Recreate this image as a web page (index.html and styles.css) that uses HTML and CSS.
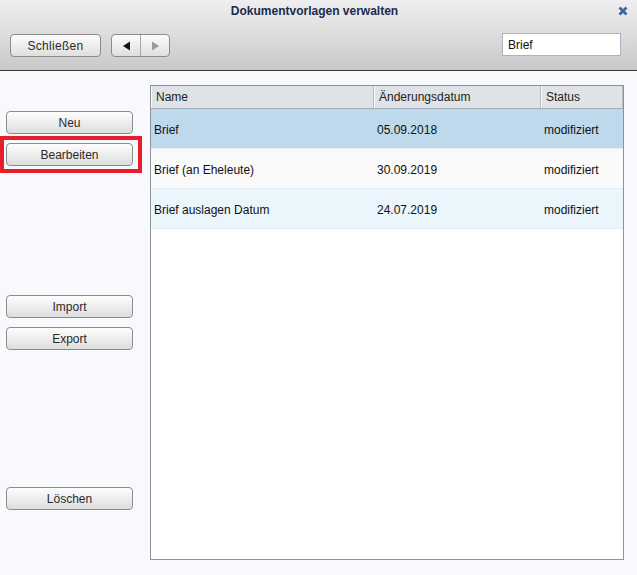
FILE: index.html
```html
<!DOCTYPE html>
<html lang="de">
<head>
<meta charset="utf-8">
<title>Dokumentvorlagen verwalten</title>
<link rel="stylesheet" href="styles.css">
</head>
<body>
<div class="dialog">
  <header class="header">
    <div class="titlebar">
      <span></span>
      <h1 class="title">Dokumentvorlagen verwalten</h1>
      <span class="close">
        <svg width="10" height="10" viewBox="0 0 10 10"><path d="M1.5 1.5 L8.5 8.5 M8.5 1.5 L1.5 8.5" stroke="#3b63a6" stroke-width="2.6" stroke-linecap="butt"/></svg>
      </span>
    </div>
    <div class="toolbar">
      <button class="btn btn-close">Schließen</button>
      <div class="nav">
        <span class="nav-btn"><svg width="9" height="10" viewBox="0 0 9 10"><path d="M1 5 L8 0.5 L8 9.5 Z" fill="#111"/></svg></span>
        <span class="nav-btn"><svg width="9" height="10" viewBox="0 0 9 10"><path d="M8 5 L1 0.5 L1 9.5 Z" fill="#9a9a9a"/></svg></span>
      </div>
      <div class="spacer"></div>
      <input class="search" type="text" value="Brief">
    </div>
  </header>
  <main class="main">
    <aside class="side">
      <div class="group g1">
        <button class="btn side-btn">Neu</button>
        <div class="marked">
          <button class="btn side-btn">Bearbeiten</button>
          <span class="highlight"></span>
        </div>
      </div>
      <div class="group g2">
        <button class="btn side-btn">Import</button>
        <button class="btn side-btn">Export</button>
      </div>
      <div class="group g3">
        <button class="btn side-btn">Löschen</button>
      </div>
    </aside>
    <section class="grid">
      <div class="row head">
        <div class="cell c1">Name</div>
        <div class="cell c2">Änderungsdatum</div>
        <div class="cell c3">Status</div>
      </div>
      <div class="row r selected">
        <div class="cell c1">Brief</div>
        <div class="cell c2">05.09.2018</div>
        <div class="cell c3">modifiziert</div>
      </div>
      <div class="row r plain">
        <div class="cell c1">Brief (an Eheleute)</div>
        <div class="cell c2">30.09.2019</div>
        <div class="cell c3">modifiziert</div>
      </div>
      <div class="row r alt">
        <div class="cell c1">Brief auslagen Datum</div>
        <div class="cell c2">24.07.2019</div>
        <div class="cell c3">modifiziert</div>
      </div>
    </section>
  </main>
</div>
</body>
</html>
```
FILE: styles.css
```css
* { box-sizing: border-box; }
html, body { margin: 0; padding: 0; }
body {
  width: 637px;
  height: 575px;
  background: #f8f9fd;
  font-family: "Liberation Sans", Arial, sans-serif;
  font-size: 12px;
  color: #222;
  overflow: hidden;
}
.dialog { width: 637px; height: 575px; display: flex; flex-direction: column; }

.header {
  height: 71px;
  background: linear-gradient(#efefef, #c9c9c9);
  border-bottom: 1px solid #3a3a3a;
  display: flex;
  flex-direction: column;
}
.titlebar {
  height: 22px;
  display: grid;
  grid-template-columns: 1fr auto 1fr;
  align-items: center;
}
.title {
  margin: 0;
  font-size: 12px;
  font-weight: bold;
  color: #1c2a4c;
  letter-spacing: 0;
  padding-right: 8px;
}
.close { justify-self: end; margin-right: 9px; display: flex; margin-top: -1px; }

.toolbar {
  display: flex;
  align-items: center;
  padding: 0 16px 0 10px;
  margin-top: 12px;
}
.btn {
  font-family: "Liberation Sans", Arial, sans-serif;
  font-size: 12px;
  color: #2a2a2a;
  background: linear-gradient(#fdfdfd, #dedede);
  border: 1px solid #8c8c8c;
  border-radius: 4px;
  height: 23px;
  padding: 0;
  display: flex;
  align-items: center;
  justify-content: center;
}
.btn-close { width: 91px; letter-spacing: 0.3px; }
.nav {
  margin-left: 10px;
  width: 59px;
  height: 23px;
  border: 1px solid #8c8c8c;
  border-radius: 4px;
  background: linear-gradient(#fdfdfd, #dedede);
  display: flex;
}
.nav-btn { flex: 1; display: flex; align-items: center; justify-content: center; }
.nav-btn + .nav-btn { border-left: 1px solid #a8a8a8; }
.spacer { flex: 1; }
.search {
  width: 119px;
  height: 23px;
  margin-top: -2px;
  border: 1px solid #a7b4c2;
  background: #fff;
  font-family: "Liberation Sans", Arial, sans-serif;
  font-size: 12px;
  color: #111;
  padding: 0 5px;
  outline: none;
}

.main { display: flex; flex: 1; }
.side { width: 150px; display: flex; flex-direction: column; padding-left: 6px; }
.group { display: flex; flex-direction: column; gap: 9px; }
.g1 { margin-top: 40px; }
.g2 { margin-top: 129px; }
.g3 { margin-top: 137px; }
.side-btn { width: 127px; }
.marked { position: relative; }
.highlight {
  position: absolute;
  left: -6px;
  top: -7px;
  width: 142px;
  height: 37px;
  border: 4px solid #e6202b;
}

.grid {
  margin-top: 14px;
  width: 474px;
  height: 475px;
  border: 1px solid #8e939a;
  background: #fff;
}
.row { display: grid; grid-template-columns: 223px 167px 82px; }
.head { height: 23px; background: #dfe3e7; border-bottom: 1px solid #a3abb4; }
.head .cell {
  border-left: 1px solid #fbfcfd;
  border-right: 1px solid #b4bcc4;
  padding-left: 4px;
  display: flex;
  align-items: center;
  color: #222;
}
.r { height: 40px; border-bottom: 1px solid #e6eef5; }
.r .cell { padding-left: 3px; padding-top: 2px; display: flex; align-items: center; color: #111; }
.selected { background: #bfd9ec; }
.plain { background: #fafafa; }
.alt { background: #ebf5fc; }
```
